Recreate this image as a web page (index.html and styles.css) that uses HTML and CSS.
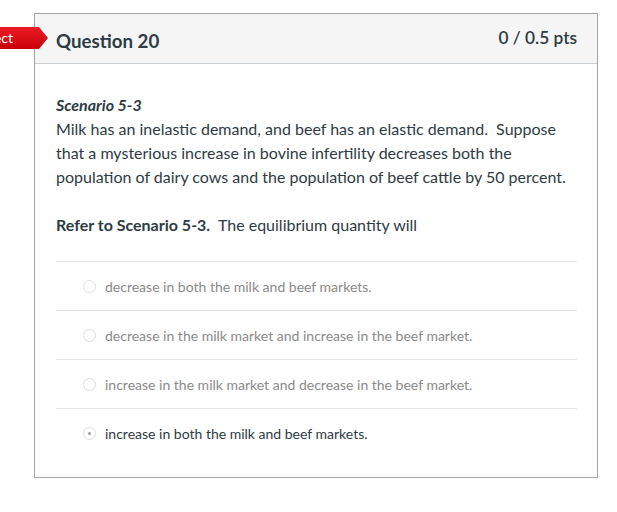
FILE: index.html
```html
<!DOCTYPE html>
<html>
<head>
<meta charset="utf-8">
<link rel="stylesheet" href="styles.css">
</head>
<body>
<div class="page">
  <div class="flag">Incorrect</div>
  <div class="question">
    <div class="qheader">
      <span class="qtitle">Question 20</span>
      <span class="qpts">0 / 0.5 pts</span>
    </div>
    <div class="qbody">
      <div class="scenario">Scenario 5-3</div>
      <p class="text">Milk has an inelastic demand, and beef has an elastic demand.&nbsp; Suppose that a mysterious increase in bovine infertility decreases both the population of dairy cows and the population of beef cattle by 50 percent.</p>
      <p class="prompt"><b>Refer to Scenario 5-3.</b>&nbsp; The equilibrium quantity will</p>
      <div class="answers">
        <div class="answer"><span class="radio"></span><span>decrease in both the milk and beef markets.</span></div>
        <div class="answer"><span class="radio"></span><span>decrease in the milk market and increase in the beef market.</span></div>
        <div class="answer"><span class="radio"></span><span>increase in the milk market and decrease in the beef market.</span></div>
        <div class="answer selected"><span class="radio"></span><span>increase in both the milk and beef markets.</span></div>
      </div>
    </div>
  </div>
</div>
</body>
</html>
```
FILE: styles.css
```css
html, body { margin: 0; padding: 0; background: #fff; }
body { font-family: Lato, "Noto Sans", sans-serif; color: #2d3b45; }
.page { position: relative; padding: 13px 0 0 34px; width: 564px; }
.flag {
  position: absolute; left: -52px; top: 27px; height: 22px; width: 100px;
  background: linear-gradient(#ee1c24, #c8000a);
  color: #fff; font-size: 14px; line-height: 21px; text-align: right;
  padding-right: 35px; box-sizing: border-box;
  clip-path: polygon(0 0, 91% 0, 100% 50%, 91% 100%, 0 100%);
}
.question { border: 1px solid #a5a5a5; width: 562px; }
.qheader {
  background: #f5f5f5; border-bottom: 1px solid #c7cdd1; height: 49px;
  display: flex; justify-content: space-between; align-items: center;
  padding: 0 20px 0 21px;
}
.qtitle { font-size: 18.7px; font-weight: bold; margin-top: 5px; }
.qpts { font-size: 17.3px; font-weight: 600; color: #2d3b45; margin-top: -3px; }
.qbody { padding: 29px 20px 20px 21px; font-size: 16px; line-height: 24px; }
.scenario { font-weight: bold; font-style: italic; }
.text { margin: 0; }
.prompt { margin: 24px 0 0; }
.answers { margin-top: 24px; }
.answer {
  border-top: 1px solid #e5e5e5; display: flex; align-items: center;
  padding-left: 27px; font-size: 14px; color: #8a8a8a; padding-top: 1px; box-sizing: border-box; height: 49px;
}
.answer.selected { color: #2d3b45; }
.radio {
  width: 13px; height: 13px; border: 1px solid #ddd; border-radius: 50%;
  margin-right: 9px; box-sizing: border-box; position: relative; flex: none;
}
.answer.selected .radio::after {
  content: ""; position: absolute; left: 4px; top: 4px; width: 3px; height: 3px; border-radius: 50%; background: #999;
}
```
